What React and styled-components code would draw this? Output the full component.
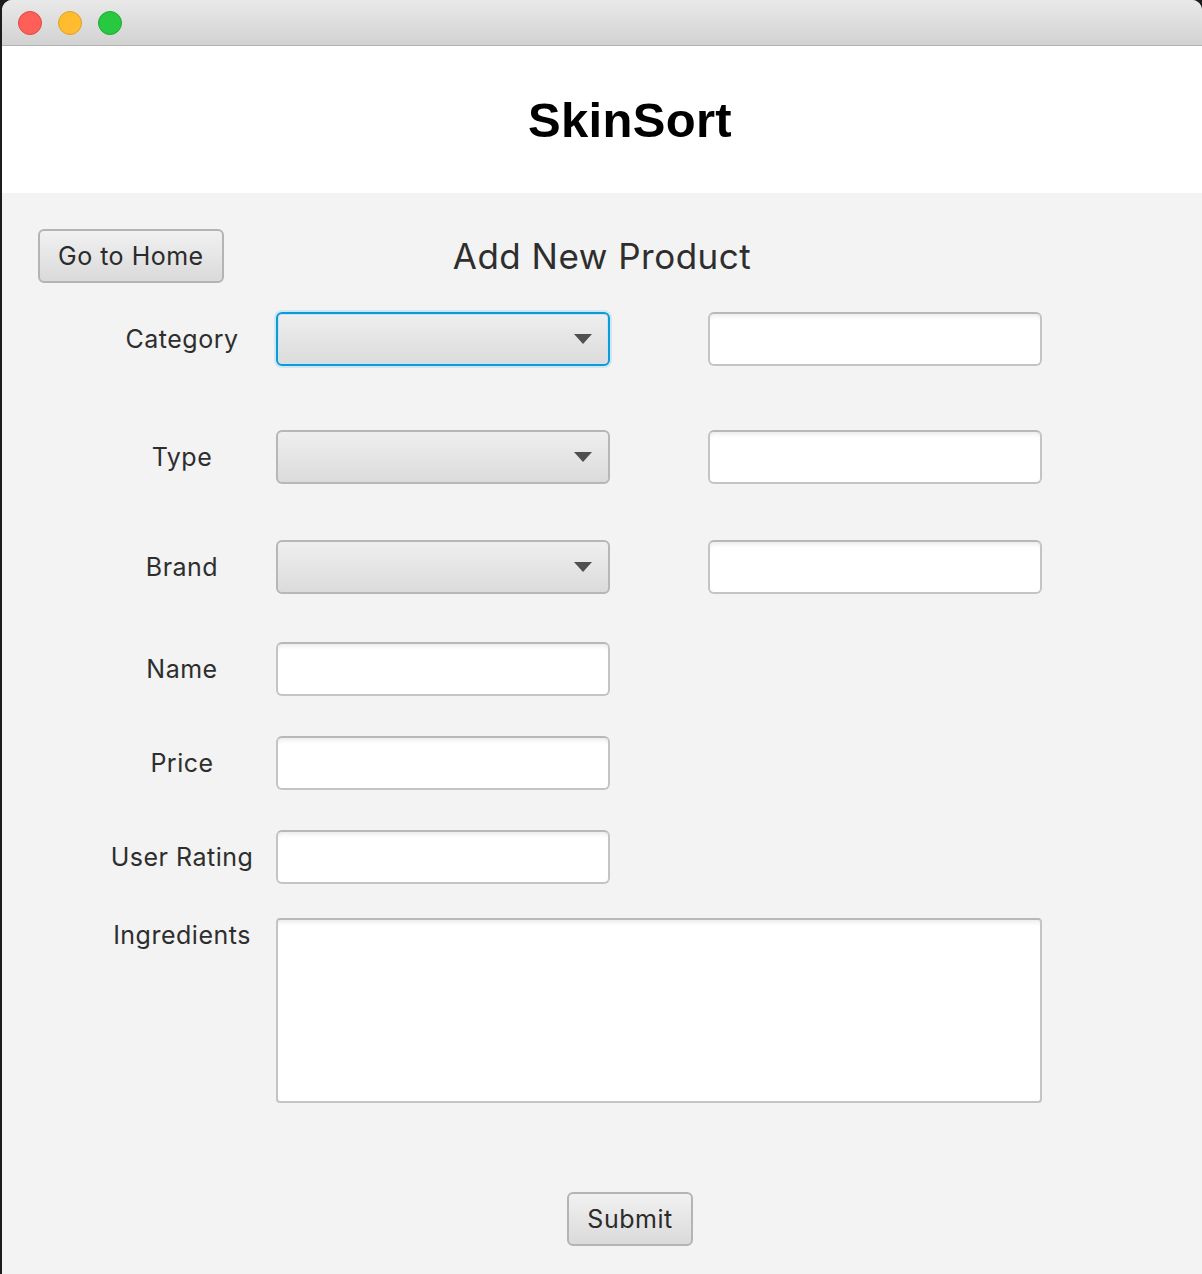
import React from "react";
import styled, { createGlobalStyle } from "styled-components";

const GlobalStyle = createGlobalStyle`
  html, body {
    margin: 0;
    padding: 0;
    background: #1c1c1e;
  }
  body {
    font-family: Inter, "Open Sans", "Liberation Sans", sans-serif;
  }
`;

const Window = styled.div`
  margin-left: 2px;
  width: 1200px;
  height: 1274px;
  display: flex;
  flex-direction: column;
  background: #f3f3f3;
  border-radius: 10px 10px 0 0;
  overflow: hidden;
`;

const TitleBar = styled.div`
  height: 45px;
  flex-shrink: 0;
  display: flex;
  align-items: center;
  gap: 16px;
  padding-left: 16px;
  background: linear-gradient(#e9e9e9, #d2d2d2);
  border-bottom: 1px solid #b3b3b3;
`;

const Light = styled.span`
  width: 22px;
  height: 22px;
  border-radius: 50%;
  background: ${p => p.$fill};
  border: 1px solid ${p => p.$edge};
`;

const Header = styled.header`
  height: 147px;
  flex-shrink: 0;
  background: #fff;
  display: flex;
  align-items: center;
  justify-content: center;
  padding-left: 56px;
`;

const AppName = styled.h1`
  margin: 0;
  font-family: "Liberation Sans", Arial, sans-serif;
  font-weight: 700;
  font-size: 49px;
  color: #000;
  letter-spacing: 0.3px;
`;

const Body = styled.main`
  flex: 1;
  padding-top: 36px;
  display: flex;
  flex-direction: column;
`;

const TopRow = styled.div`
  display: grid;
  grid-template-columns: 1fr auto 1fr;
  align-items: center;
  height: 54px;
  padding-left: 36px;
  padding-right: 36px;
`;

const Button = styled.button`
  height: 54px;
  padding: 0 18px;
  justify-self: start;
  font-family: inherit;
  font-size: 25px;
  letter-spacing: 0.5px;
  color: #2b2b2b;
  background: linear-gradient(#f1f1f1, #dadada);
  border: 2px solid #b4b4b4;
  border-radius: 6px;
`;

const PageTitle = styled.h2`
  margin: 0;
  font-weight: 400;
  font-size: 35px;
  letter-spacing: 0.5px;
  color: #2e2e2e;
`;

const Form = styled.div`
  display: flex;
  flex-direction: column;
  padding-left: 106px;
  margin-top: 29px;
`;

const Row = styled.div`
  display: grid;
  grid-template-columns: 148px 334px 412px;
  column-gap: 20px;
  align-items: ${p => (p.$top ? "start" : "center")};
  margin-top: ${p => p.$gap || 0}px;
  & > :nth-child(3) {
    width: 334px;
    justify-self: end;
  }
`;

const Label = styled.label`
  text-align: center;
  font-size: 25px;
  letter-spacing: 0.5px;
  color: #2e2e2e;
  padding-top: ${p => (p.$top ? 2 : 0)}px;
`;

const Combo = styled.div`
  position: relative;
  height: 54px;
  box-sizing: border-box;
  border-radius: 6px;
  background: linear-gradient(#efefef, #dbdbdb);
  border: 2px solid ${p => (p.$focused ? "#0d9ad8" : "#b7b7b7")};
  box-shadow: ${p => (p.$focused ? "0 0 0 2px #cfe7f3, inset 0 0 0 1px #cce4f0" : "none")};
  &::after {
    content: "";
    position: absolute;
    right: 16px;
    top: 20px;
    border-left: 9px solid transparent;
    border-right: 9px solid transparent;
    border-top: 10px solid #4f4f4f;
  }
`;

const Field = styled.div`
  height: ${p => p.$h || 54}px;
  box-sizing: border-box;
  border-radius: 6px;
  background: #fff;
  border: 2px solid #c4c4c4;
  border-top-color: #b8b8b8;
  box-shadow: inset 0 6px 5px -4px #e9e9e9;
`;

const Area = styled(Field)`
  grid-column: 2 / span 2;
  width: 766px;
  border-radius: 4px;
`;

const Footer = styled.div`
  display: flex;
  justify-content: center;
  padding-left: 56px;
  margin-top: 89px;
`;

const rows = [
  { label: "Category", combo: true, focused: true, extra: true, gap: 0 },
  { label: "Type", combo: true, extra: true, gap: 64 },
  { label: "Brand", combo: true, extra: true, gap: 56 },
  { label: "Name", gap: 48 },
  { label: "Price", gap: 40 },
  { label: "User Rating", gap: 40 },
];

export default function App() {
  return (
    <>
      <GlobalStyle />
      <Window>
        <TitleBar>
          <Light $fill="#fe5f57" $edge="#e2463f" />
          <Light $fill="#febc2e" $edge="#e0a028" />
          <Light $fill="#28c840" $edge="#1aac2c" />
        </TitleBar>
        <Header>
          <AppName>SkinSort</AppName>
        </Header>
        <Body>
          <TopRow>
            <Button>Go to Home</Button>
            <PageTitle>Add New Product</PageTitle>
            <span />
          </TopRow>
          <Form>
            {rows.map(r => (
              <Row key={r.label} $gap={r.gap}>
                <Label>{r.label}</Label>
                {r.combo ? <Combo $focused={r.focused} /> : <Field />}
                {r.extra ? <Field /> : <span />}
              </Row>
            ))}
            <Row $gap={34} $top>
              <Label $top>Ingredients</Label>
              <Area $h={185} />
            </Row>
          </Form>
          <Footer>
            <Button>Submit</Button>
          </Footer>
        </Body>
      </Window>
    </>
  );
}
